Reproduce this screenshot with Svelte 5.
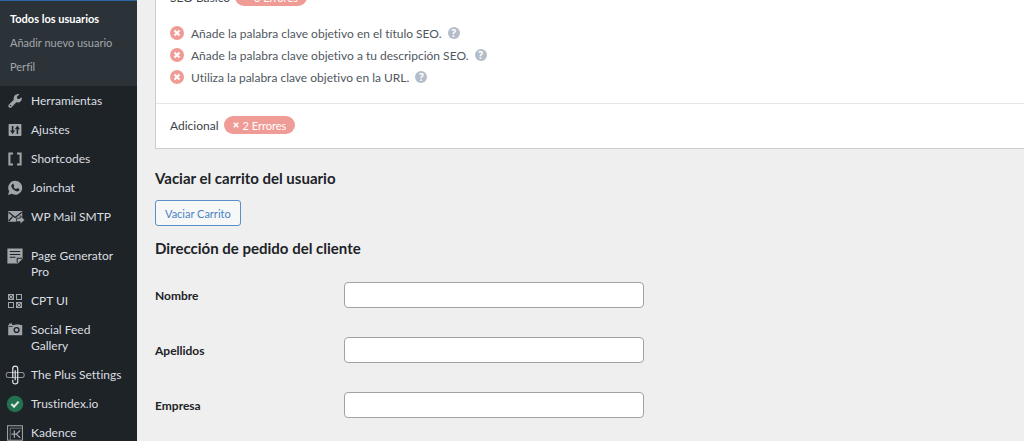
<script>
    const submenu = ["Todos los usuarios", "Añadir nuevo usuario", "Perfil"];
    const menu = [
        {icon: "tools", text: "Herramientas"},
        {icon: "settings", text: "Ajustes"},
        {icon: "shortcodes", text: "Shortcodes"},
        {icon: "chat", text: "Joinchat"},
        {icon: "mail", text: "WP Mail SMTP"},
        {icon: "page", text: "Page Generator Pro", separator: true},
        {icon: "cpt", text: "CPT UI"},
        {icon: "camera", text: "Social Feed Gallery"},
        {icon: "plus", text: "The Plus Settings"},
        {icon: "trust", text: "Trustindex.io"},
        {icon: "kadence", text: "Kadence"}
    ];
    const checks = [
        "Añade la palabra clave objetivo en el título SEO.",
        "Añade la palabra clave objetivo a tu descripción SEO.",
        "Utiliza la palabra clave objetivo en la URL."
    ];
    let fields = [
        {id: "first_name", label: "Nombre", value: ""},
        {id: "last_name", label: "Apellidos", value: ""},
        {id: "company", label: "Empresa", value: ""}
    ];
</script>

<svelte:head>
    <title>Perfil de usuario</title>
</svelte:head>

<div class="page">
    <nav class="sidebar">
        <ul class="submenu">
            {#each submenu as item, i}
                <li><a href="#usuarios" class:current={i === 0}>{item}</a></li>
            {/each}
        </ul>
        <ul class="menu">
            {#each menu as item}
                <li class:separator={item.separator}>
                    <a href="#{item.icon}">
                        <svg class="icon" viewBox="0 0 20 20" aria-hidden="true">
                            {#if item.icon === "tools"}
                                <path fill="currentColor" d="M18.300 5.200c1 3.500-1.500 6.700-5 6.700-.6 0-1.100-.1-1.600-.2l-5.900 6.100c-1 1-2.500 1-3.400.1-1-1-.9-2.500.1-3.500l6-5.900C7.600 4.800 10 1.200 14 1.200c.6 0 1.100.1 1.600.3l-3.200 3.200.4 2.400 2.400.4z"/>
                                <circle cx="4.400" cy="15.700" r=".9" fill="#1d2327"/>
                            {:else if item.icon === "settings"}
                                <rect x="2" y="2.500" width="16" height="15" rx="1" fill="currentColor"/>
                                <path d="M7 5v7M13 8v7" stroke="#1d2327" stroke-width="2"/>
                                <path d="M3.800 10.500h6.400L7 15zM9.800 9h6.400L13 4.500z" fill="#1d2327"/>
                            {:else if item.icon === "shortcodes"}
                                <path d="M7.500 3.200h-4.500v13.600h4.500M12.500 3.200h4.500v13.600h-4.500" fill="none" stroke="currentColor" stroke-width="2.600"/>
                            {:else if item.icon === "chat"}
                                <path fill="currentColor" d="M10.500 1a8.700 8.700 0 1 1-4.300 16.300L1.300 18.700l1.400-4.700A8.700 8.700 0 0 1 10.500 1z"/>
                                <path fill="#1d2327" d="M6.500 5.200c.5-.5 1.300-.5 1.600 0l.9 2c.1.500-.3 1-.8 1.500.8 1.400 1.900 2.300 3.300 2.900l1-1.200c.3-.3.600-.3 1-.1l1.800.9c.5.400.1 2-1 2.700-1.300.8-3.500.1-5.500-1.500C6.500 10.600 5.200 8.500 5.400 7.100c.1-.8.500-1.500 1.100-1.900z"/>
                            {:else if item.icon === "mail"}
                                <path fill="currentColor" d="M1.500 2.500h17.500v8l-6.500 5.500h-11z"/>
                                <path d="M2 4l8.200 6.500L18.500 4M2 15l5-5.500" fill="none" stroke="#1d2327" stroke-width="1.600"/>
                                <path fill="currentColor" stroke="#1d2327" stroke-width="1" d="M12 11.500h4.500V8.300l5.800 5.400-5.800 5.400v-3.200H12z"/>
                            {:else if item.icon === "page"}
                                <path fill="currentColor" d="M.5.500h19v13l-6 6H.5z"/>
                                <path d="M3.500 4.500h13M3.500 8h13M3.500 11.500h7" stroke="#1d2327" stroke-width="1.300"/>
                                <path d="M12.800 18.500v-5.800h6" fill="none" stroke="#1d2327" stroke-width="1.300"/>
                            {:else if item.icon === "cpt"}
                                <path d="M1.900 1.900h6.200v6.200H1.900zM11.900 1.900h6.200v6.200h-6.200zM1.900 11.900h6.200v6.200H1.900zM11.900 11.900h6.200v6.200h-6.200zM2 2l6 6M8 2L2 8M12 12l6 6M18 12l-6 6" fill="none" stroke="currentColor" stroke-width="1.300"/>
                            {:else if item.icon === "camera"}
                                <path fill="currentColor" d="M2.500 2h4v1.800h3L10.500 3h5l1 .8h2.500v12.700H1.500V3.800h1z"/>
                                <circle cx="12" cy="10" r="3.900" fill="#1d2327"/>
                                <circle cx="12" cy="10" r="2.200" fill="currentColor"/>
                                <path d="M2 5.500h5" stroke="#1d2327"/>
                            {:else if item.icon === "plus"}
                                <path d="M6 13H1.500Q-1 13-1 10t2.500-3H15M14 7h5q2.500 0 2.500 3T19 13H6" fill="none" stroke="#8d9297" stroke-width="1.300"/>
                                <path d="M7.200 14V2Q7.200-1 10.300-1t3.100 3v9M13.400 9v9.500q0 2.700-3.100 2.700t-3.100-2.700V16M10.300 4v12.500" fill="none" stroke="#e4e6e8" stroke-width="1.500"/>
                            {:else if item.icon === "trust"}
                                <circle cx="10" cy="10" r="10.300" fill="#23724f"/>
                                <path d="M5.500 10l3.300 3.300L14.500 7" fill="none" stroke="#dfe9e4" stroke-width="2.600"/>
                            {:else}
                                <path d="M.7 1h18.600v18H.7z" fill="none" stroke="currentColor" stroke-width="1.300"/>
                                <path d="M4 4h15M4 4v15" fill="none" stroke="currentColor" stroke-width=".8"/>
                                <path d="M9.200 7v9M16.500 7l-5 4.500 5 4.500M5.500 11.500h6" fill="none" stroke="currentColor" stroke-width="1.600"/>
                            {/if}
                        </svg>
                        <span>{item.text}</span>
                    </a>
                </li>
            {/each}
        </ul>
    </nav>

    <main>
        <section class="panel">
            <div class="group basic">
                <div class="group_title">
                    <span>SEO Básico</span>
                    <span class="badge">
                        <svg viewBox="0 0 8 8" aria-hidden="true"><path d="M1 1l6 6M7 1L1 7"/></svg>
                        3 Errores
                    </span>
                </div>
                <ul class="checks">
                    {#each checks as check}
                        <li>
                            <svg class="fail" viewBox="0 0 14 14" aria-hidden="true">
                                <circle cx="7" cy="7" r="7"/>
                                <path d="M4.500 4.500l5 5M9.500 4.500l-5 5"/>
                            </svg>
                            <span>{check}</span>
                            <button class="help" aria-label="Ayuda">?</button>
                        </li>
                    {/each}
                </ul>
            </div>
            <div class="group">
                <div class="group_title">
                    <span>Adicional</span>
                    <span class="badge">
                        <svg viewBox="0 0 8 8" aria-hidden="true"><path d="M1 1l6 6M7 1L1 7"/></svg>
                        2 Errores
                    </span>
                </div>
            </div>
        </section>

        <h2>Vaciar el carrito del usuario</h2>
        <button class="empty_cart">Vaciar Carrito</button>

        <h2>Dirección de pedido del cliente</h2>
        <form>
            {#each fields as field}
                <div class="row">
                    <label for={field.id}>{field.label}</label>
                    <input type="text" id={field.id} bind:value={field.value}>
                </div>
            {/each}
        </form>
    </main>
</div>

<style>
    :global(body){
        background-color: #efefef;
    }
    .page{
        display: flex;
        height: 100vh;
        overflow: hidden;
        font-family: Lato, "Noto Sans", sans-serif;
        font-variant-ligatures: none;
        font-size: 12px;
        color: #3c434a;
    }
    ul{
        list-style: none;
        margin: 0;
        padding: 0;
    }
    .sidebar{
        flex: 0 0 137px;
        background-color: #1d2327;
    }
    .sidebar a{
        text-decoration: none;
    }
    .submenu{
        background-color: #2c3338;
        border-top: 1px solid #2c66a8;
        padding: 6px 0 7px;
        font-size: 11px;
        line-height: 24px;
    }
    .submenu a{
        display: block;
        padding: 0 10px;
        color: #a2a7ac;
    }
    .submenu .current{
        color: #fff;
        font-weight: 700;
    }
    .menu a{
        display: flex;
        gap: 8px;
        padding: 7px 8px 6px 7px;
        color: #dcdfe1;
        line-height: 16px;
    }
    .menu .separator{
        margin-top: 10px;
    }
    .icon{
        flex: 0 0 16px;
        height: 16px;
        color: #a0a5aa;
        overflow: visible;
    }
    main{
        flex: 1;
        min-width: 0;
        padding-left: 18px;
    }
    /* the page is scrolled, so the panel starts above the window */
    .panel{
        margin-top: -28px;
        background-color: #fff;
        border: 1px solid #cbcdcf;
        border-right: none;
    }
    .group{
        padding: 12px 14px 14px;
    }
    .basic{
        padding: 15px 14px 15px;
        border-bottom: 1px solid #e6e6e8;
    }
    .group_title{
        display: flex;
        align-items: center;
        gap: 5px;
        height: 18px;
    }
    .badge{
        display: flex;
        align-items: center;
        gap: 4px;
        height: 18px;
        padding: 0 9px;
        border-radius: 9px;
        background-color: #f09c96;
        color: #fff;
        font-size: 11px;
    }
    .badge svg{
        width: 6px;
        height: 6px;
        fill: none;
        stroke: #fff;
        stroke-width: 2;
    }
    .checks{
        padding-top: 16px;
    }
    .checks li{
        display: flex;
        align-items: center;
        height: 22px;
        color: #50575e;
    }
    .fail{
        width: 14px;
        height: 14px;
        margin-right: 7px;
        fill: #f09c96;
    }
    .fail path{
        stroke: #fff;
        stroke-width: 2;
    }
    .help{
        width: 12px;
        height: 12px;
        margin-left: 6px;
        padding: 0;
        border: none;
        border-radius: 50%;
        background-color: #b4bdc9;
        color: #fff;
        font: bold 10px/12px "Noto Sans", sans-serif;
    }
    h2{
        margin: 0;
        padding: 18px 0 11px;
        font-size: 15px;
        font-weight: 700;
        line-height: 22px;
        color: #1d2327;
    }
    .empty_cart{
        display: block;
        height: 26px;
        padding: 0 9px;
        border: 1px solid #5b8fca;
        border-radius: 3px;
        background-color: #f6f7f7;
        color: #4b83c3;
        font-family: inherit;
        font-size: 11px;
    }
    .empty_cart + h2{
        padding-top: 11px;
    }
    .row{
        display: flex;
        align-items: center;
        padding: 12px 0 17px;
    }
    label{
        flex: 0 0 189px;
        color: #1d2327;
        font-weight: 700;
    }
    input{
        box-sizing: border-box;
        width: 300px;
        height: 26px;
        padding: 0 7px;
        border: 1px solid #a0a2a5;
        border-radius: 4px;
        background-color: #fff;
        font-family: inherit;
        font-size: 12px;
    }
</style>
